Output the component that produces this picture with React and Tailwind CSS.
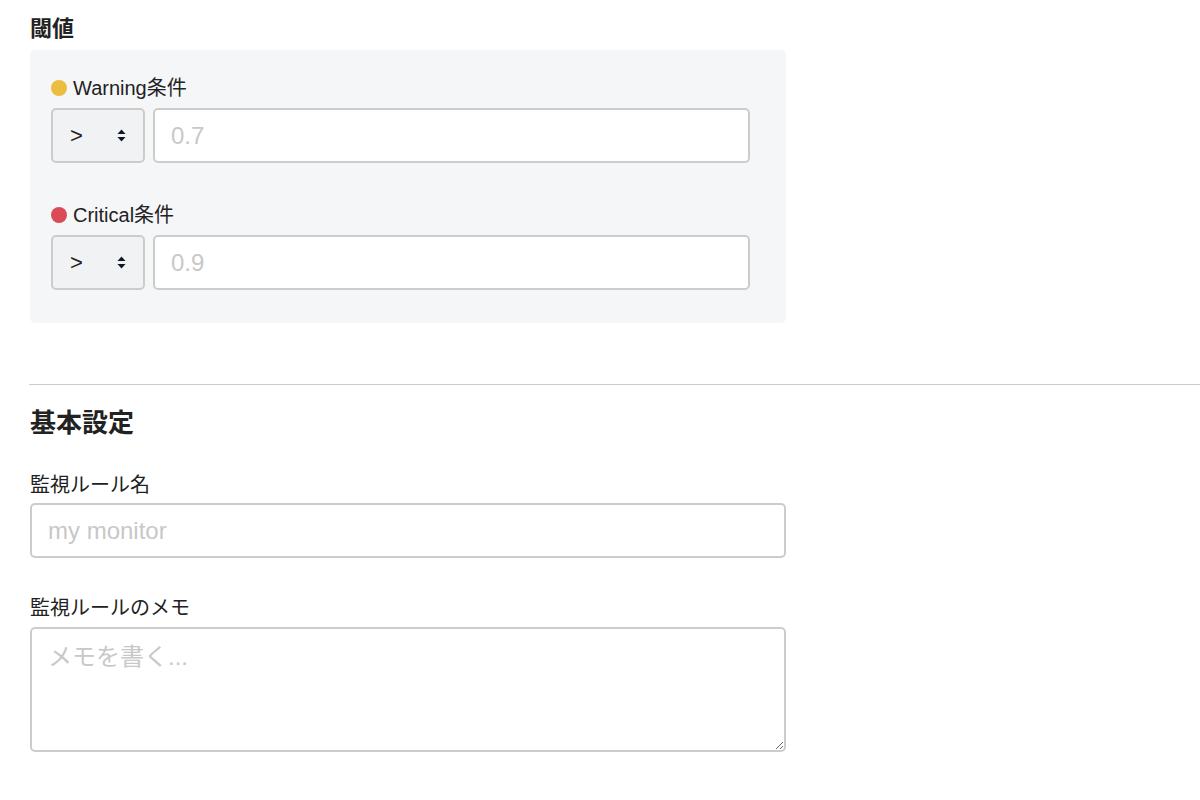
import { useState } from 'react';

const font = { fontFamily: '"Liberation Sans", "Noto Sans CJK JP", sans-serif' };

function Chevrons() {
  return (
    <svg width="9" height="15" viewBox="0 0 9 15" className="text-gray-900">
      <path d="M4.5 1.5 L8.5 6 H0.5 Z" fill="currentColor" />
      <path d="M4.5 13.5 L8.5 9 H0.5 Z" fill="currentColor" />
    </svg>
  );
}

function Condition({ color, label, placeholder }) {
  const [op, setOp] = useState('>');
  return (
    <div>
      <div className="flex items-center gap-[6px] h-[32px] mb-[4px]">
        <span className={`w-[16px] h-[16px] rounded-full shrink-0 ${color}`} />
        <span className="text-[20px] text-[#222]">{label}</span>
      </div>
      <div className="flex gap-[8px]">
        <div className="relative w-[94px] h-[55px] shrink-0">
          <select
            value={op}
            onChange={(e) => setOp(e.target.value)}
            className="appearance-none w-full h-full bg-[#f1f2f4] border-2 border-[#cccccc] rounded-[5px] pl-[17px] text-[22px] text-[#222] outline-none"
          >
            <option value=">">&gt;</option>
            <option value="<">&lt;</option>
          </select>
          <span className="absolute right-[19px] top-[20px] pointer-events-none">
            <Chevrons />
          </span>
        </div>
        <input
          type="text"
          placeholder={placeholder}
          className="w-[597px] h-[55px] bg-white border-2 border-[#cccccc] rounded-[5px] px-[16px] text-[24px] placeholder:text-[#c8c8c8] outline-none"
        />
      </div>
    </div>
  );
}

export default function App() {
  return (
    <div className="bg-white min-h-[800px] text-[#222]" style={font}>
      <div className="pl-[30px] pt-[16px]">
        <h2 className="text-[22px] font-bold leading-[26px] mb-[8px]">閾値</h2>
        <div className="w-[756px] h-[273px] bg-[#f5f6f8] rounded-[5px] pl-[21px] pt-[22px]">
          <div className="flex flex-col gap-[36px]">
            <Condition color="bg-[#ecbd3e]" label="Warning条件" placeholder="0.7" />
            <Condition color="bg-[#db4b57]" label="Critical条件" placeholder="0.9" />
          </div>
        </div>
      </div>

      <hr className="ml-[29px] mt-[61px] border-t border-[#cccccc]" />

      <div className="pl-[30px] pt-[22px]">
        <h2 className="text-[26px] font-bold leading-[32px]">基本設定</h2>

        <label className="block text-[20px] leading-[24px] mt-[34px] mb-[6px]">監視ルール名</label>
        <input
          type="text"
          placeholder="my monitor"
          className="block w-[756px] h-[55px] border-2 border-[#cccccc] rounded-[5px] px-[16px] text-[24px] placeholder:text-[#c8c8c8] outline-none"
        />

        <label className="block text-[20px] leading-[24px] mt-[38px] mb-[7px]">監視ルールのメモ</label>
        <textarea
          placeholder="メモを書く..."
          className="block w-[756px] h-[125px] border-2 border-[#cccccc] rounded-[5px] px-[16px] py-[10px] text-[24px] leading-[36px] placeholder:text-[#c8c8c8] outline-none"
        />
      </div>
    </div>
  );
}
